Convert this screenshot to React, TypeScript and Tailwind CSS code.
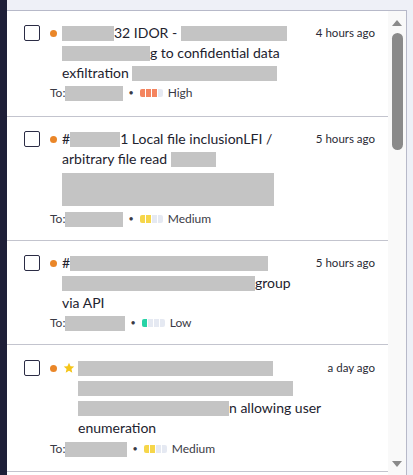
import React from 'react'

type Level = 'High' | 'Medium' | 'Low'

const levelFill: Record<Level, { count: number; color: string }> = {
  High: { count: 3, color: 'bg-[#f4845f]' },
  Medium: { count: 2, color: 'bg-[#f6d64a]' },
  Low: { count: 1, color: 'bg-[#27d3a6]' },
}

function Redact({ w, h = 'h-[15px]' }: { w: string; h?: string }) {
  return <span className={`inline-block ${w} ${h} bg-[#c4c4c4] align-[-3px]`} />
}

function SeverityBars({ level }: { level: Level }) {
  const { count, color } = levelFill[level]
  return (
    <span className="inline-flex gap-px ml-[6px] mr-[5px]">
      {[0, 1, 2, 3].map((i) => (
        <span
          key={i}
          className={`w-[5px] h-[8px] ${i < count ? color : 'bg-[#e5e9f2]'} ${i === 0 ? 'rounded-l-[2px]' : ''} ${i === 3 ? 'rounded-r-[2px]' : ''}`}
        />
      ))}
    </span>
  )
}

function Row({
  lines,
  time,
  level,
  toWidth,
  starred,
  pad = 'pt-3 pb-3',
  metaGap = 'mt-px',
}: {
  lines: React.ReactNode[]
  time: string
  level: Level
  toWidth: string
  starred?: boolean
  pad?: string
  metaGap?: string
}) {
  return (
    <div className={`flex border-b border-[#c3c4ce] pl-[17px] pr-[13px] ${pad}`}>
      <div className="h-5 flex items-center">
        <span className="w-4 h-4 border-[1.5px] border-[#2b2c45] rounded-[2px] bg-white" />
      </div>
      <div className="flex-1 ml-[10px]">
        <div className="flex">
          <div className="h-5 flex items-center">
            <span className="w-[7px] h-[7px] rounded-full bg-[#ea8628]" />
          </div>
          {starred && (
            <div className="h-5 flex items-center ml-[6px]">
              <svg width="12" height="12" viewBox="0 0 24 24" className="fill-[#f5c518]">
                <path d="M12 1.5l3.1 7 7.4.6-5.6 4.9 1.7 7.4L12 17.5l-6.6 3.9 1.7-7.4-5.6-4.9 7.4-.6z" />
              </svg>
            </div>
          )}
          <div className={`${starred ? 'ml-[3px]' : 'ml-[5px]'} flex-1 text-[14px] leading-5 text-[#22222e]`}>
            {lines.map((l, i) => (
              <div key={i} className="whitespace-nowrap">
                {l}
              </div>
            ))}
          </div>
          <div className="text-[11.5px] leading-5 text-[#2a2a35] whitespace-nowrap">{time}</div>
        </div>
        <div className={`${metaGap} flex items-center text-[12px] leading-[18px] text-[#3a3a45]`}>
          <span>To:</span>
          <Redact w={toWidth} />
          <span className="ml-[5px] text-[9px]">•</span>
          <SeverityBars level={level} />
          <span>{level}</span>
        </div>
      </div>
    </div>
  )
}

export default function App() {
  return (
    <div className="flex w-[413px] h-[475px] overflow-hidden bg-[#eef0f7] font-['Lato','Noto_Sans',sans-serif]">
      <div className="w-[7px] shrink-0 bg-[#1e1f38]" />
      <div className="flex flex-col w-[400px]">
        <div className="h-[10px] shrink-0 bg-[#eef0f7]" />
        <div className="flex flex-1 min-h-0 bg-white border-t border-r border-[#b7b9c9]">
          <div className="w-[381px] shrink-0">
            <Row
              time="4 hours ago"
              level="High"
              toWidth="w-[58px]"
              pad="pt-3 pb-[14px]"
              lines={[
                <>
                  <Redact w="w-[52px]" />
                  32 IDOR - <Redact w="w-[106px]" />
                </>,
                <>
                  <Redact w="w-[88px]" />g to confidential data
                </>,
                <>
                  exfiltration <Redact w="w-[145px]" />
                </>,
              ]}
            />
            <Row
              time="5 hours ago"
              level="Medium"
              toWidth="w-[58px]"
              lines={[
                <>
                  #<Redact w="w-[50px]" />1 Local file inclusionLFI /
                </>,
                <>
                  arbitrary file read <Redact w="w-[45px]" />
                </>,
                <div className="h-10 flex items-center">
                  <span className="block w-[212px] h-[33px] bg-[#c4c4c4]" />
                </div>,
              ]}
            />
            <Row
              time="5 hours ago"
              level="Low"
              toWidth="w-[60px]"
              lines={[
                <>
                  #<Redact w="w-[198px]" />
                </>,
                <>
                  <Redact w="w-[193px]" />
                  group
                </>,
                <>via API</>,
              ]}
            />
            <Row
              starred
              time="a day ago"
              level="Medium"
              toWidth="w-[62px]"
              pad="pt-[13px] pb-[13px]"
              metaGap="mt-[2px]"
              lines={[
                <Redact w="w-[195px]" />,
                <Redact w="w-[215px]" />,
                <>
                  <Redact w="w-[151px]" />n allowing user
                </>,
                <>enumeration</>,
              ]}
            />
          </div>
          <div className="w-[18px] shrink-0 bg-[#f9f9f9] flex flex-col items-center">
            <svg width="10" height="6" viewBox="0 0 10 6" className="mt-[9px] fill-[#8a8a8a]">
              <path d="M5 0l5 6H0z" />
            </svg>
            <div className="mt-[7px] w-[11px] h-[117px] rounded-full bg-[#8a8a8a]" />
            <div className="flex-1" />
            <svg width="10" height="6" viewBox="0 0 10 6" className="mb-[8px] fill-[#8a8a8a]">
              <path d="M0 0h10L5 6z" />
            </svg>
          </div>
        </div>
      </div>
    </div>
  )
}
